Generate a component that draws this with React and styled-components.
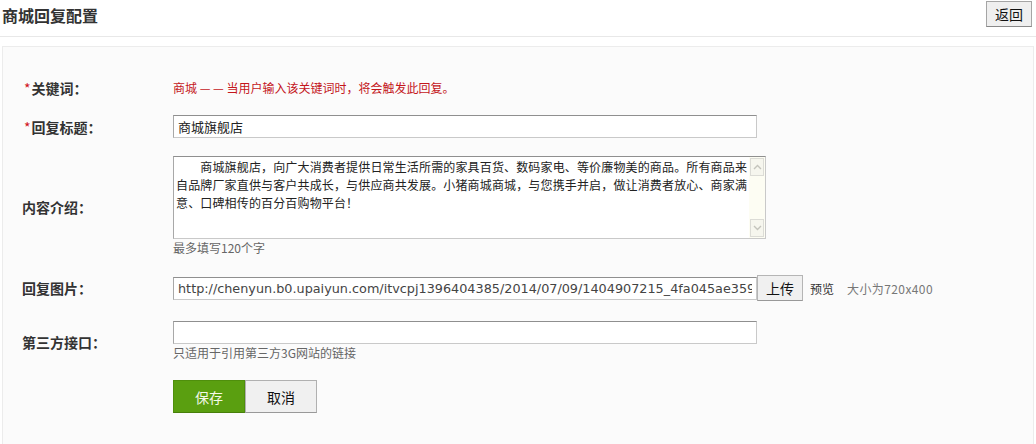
import React from "react";
import styled, { createGlobalStyle } from "styled-components";

const GlobalStyle = createGlobalStyle`
  html, body {
    margin: 0;
    padding: 0;
    background: #fff;
    font-family: "Noto Sans CJK SC", sans-serif;
    color: #333;
  }
`;

const Page = styled.div`
  width: 1036px;
  height: 444px;
  overflow: hidden;
`;

const Header = styled.div`
  display: flex;
  justify-content: space-between;
  align-items: flex-start;
  height: 36px;
  padding: 0 4px 0 2px;
  border-bottom: 1px solid #e8e8e8;
`;

const Title = styled.h2`
  margin: 0;
  font-size: 16px;
  font-weight: 700;
  line-height: 30px;
  color: #333;
`;

const BackButton = styled.button`
  margin-top: 1px;
  width: 46px;
  height: 26px;
  padding: 0;
  background: #efefef;
  border: 1px solid #a5a5a5;
  border-bottom-color: #888;
  font-family: "Noto Sans CJK SC", sans-serif;
  font-size: 14px;
  color: #111;
`;

const Panel = styled.div`
  margin: 9px 2px 0 2px;
  height: 400px;
  padding-top: 23px;
  background: #fbfbfb;
  border: 1px solid #ececec;
  border-bottom: none;
  display: grid;
  grid-template-columns: 170px 1fr;
  align-content: start;
`;

const Label = styled.div`
  display: flex;
  align-items: center;
  padding-left: 19px;
  padding-top: ${(p) => p.$shift || 0}px;
  font-size: 14px;
  font-weight: 700;
  color: #333;
`;

const Star = styled.span`
  color: #d0141c;
  font-weight: 400;
  font-size: 14px;
  margin-right: 1px;
  padding-left: 2px;
`;

const Field = styled.div`
  padding: ${(p) => 9 + (p.$shift || 0)}px 0 9px;
  display: flex;
  flex-direction: column;
  justify-content: center;
`;

const Inline = styled.div`
  display: flex;
  align-items: center;
`;

const Notice = styled.div`
  font-size: 12px;
  line-height: 18px;
  color: #c4161c;
`;

const TextInput = styled.input`
  box-sizing: border-box;
  width: 584px;
  height: 23px;
  margin: 0;
  padding: 0 4px;
  background: #fff;
  border: 1px solid #c9c9c9;
  border-top-color: #8f8f8f;
  border-left-color: #a8a8a8;
  font-family: ${(p) => (p.$latin ? '"DejaVu Sans", sans-serif' : '"Noto Sans CJK SC", sans-serif')};
  font-size: ${(p) => (p.$latin ? "12.8px" : "13px")};
  color: ${(p) => (p.$latin ? "#444" : "#222")};
  outline: none;
`;

const AreaBox = styled.div`
  box-sizing: border-box;
  width: 593px;
  height: 83px;
  display: flex;
  background: #fff;
  border: 1px solid #c9c9c9;
  border-top-color: #8f8f8f;
  border-left-color: #a8a8a8;
`;

const TextArea = styled.textarea`
  flex: 1;
  margin: 0;
  padding: 1px 0 1px 2px;
  border: none;
  resize: none;
  overflow: hidden;
  white-space: pre;
  background: transparent;
  font-family: "Noto Sans CJK SC", sans-serif;
  font-size: 12px;
  letter-spacing: 0.15px;
  line-height: 18px;
  color: #222;
  outline: none;
`;

const ScrollTrack = styled.div`
  width: 16px;
  display: flex;
  flex-direction: column;
  justify-content: space-between;
  background: #fdfdf3;
`;

const ScrollArrow = styled.div`
  height: 16px;
  margin: 1px;
  display: flex;
  align-items: center;
  justify-content: center;
  background: #f6f6ee;
  border: 1px solid #dcdcd6;
`;

const Hint = styled.div`
  font-size: 12px;
  line-height: 18px;
  color: #666;
`;

const UploadButton = styled.button`
  box-sizing: border-box;
  width: 46px;
  height: 26px;
  margin: 0 7px 0 0;
  padding: 0;
  align-self: flex-start;
  background: #f0f0f0;
  border: 1px solid #b5b5b5;
  border-bottom-color: #999;
  font-family: "Noto Sans CJK SC", sans-serif;
  font-size: 14px;
  color: #111;
`;

const Preview = styled.span`
  font-size: 12px;
  color: #333;
  margin-right: 13px;
`;

const Size = styled.span`
  font-size: 12px;
  color: #777;
  letter-spacing: 0.4px;
`;

const ActionButton = styled.button`
  box-sizing: border-box;
  width: 72px;
  height: 33px;
  margin: 0;
  padding: 0;
  font-family: "Noto Sans CJK SC", sans-serif;
  font-size: 14px;
  background: ${(p) => (p.$primary ? "#5a9f10" : "#f0f0f0")};
  color: ${(p) => (p.$primary ? "#f4f8e8" : "#111")};
  border: 1px solid ${(p) => (p.$primary ? "#4f8f0c" : "#b0b0b0")};
  border-bottom-color: ${(p) => (p.$primary ? "#477f0a" : "#999")};
`;

const Chevron = ({ up }) => (
  <svg width="9" height="6" viewBox="0 0 9 6">
    <path
      d={up ? "M1 5 L4.5 1.5 L8 5" : "M1 1 L4.5 4.5 L8 1"}
      fill="none"
      stroke="#c4c4bc"
      strokeWidth="1.4"
    />
  </svg>
);

const intro =
  "\u3000\u3000商城旗舰店，向广大消费者提供日常生活所需的家具百货、数码家电、等价廉物美的商品。所有商品来\n" +
  "自品牌厂家直供与客户共成长，与供应商共发展。小猪商城商城，与您携手并启，做让消费者放心、商家满\n" +
  "意、口碑相传的百分百购物平台！";

export default function App() {
  return (
    <Page>
      <GlobalStyle />
      <Header>
        <Title>商城回复配置</Title>
        <BackButton>返回</BackButton>
      </Header>
      <Panel>
        <Label>
          <Star>*</Star>关键词：
        </Label>
        <Field>
          <Notice>商城 — — 当用户输入该关键词时，将会触发此回复。</Notice>
        </Field>

        <Label>
          <Star>*</Star>回复标题：
        </Label>
        <Field>
          <TextInput defaultValue="商城旗舰店" />
        </Field>

        <Label>内容介绍：</Label>
        <Field>
          <AreaBox>
            <TextArea defaultValue={intro} />
            <ScrollTrack>
              <ScrollArrow>
                <Chevron up />
              </ScrollArrow>
              <ScrollArrow>
                <Chevron />
              </ScrollArrow>
            </ScrollTrack>
          </AreaBox>
          <Hint>最多填写120个字</Hint>
        </Field>

        <Label>回复图片：</Label>
        <Field>
          <Inline>
            <TextInput
              $latin
              defaultValue="http://chenyun.b0.upaiyun.com/itvcpj1396404385/2014/07/09/1404907215_4fa045ae3595.jpg"
            />
            <UploadButton>上传</UploadButton>
            <Preview>预览</Preview>
            <Size>大小为720x400</Size>
          </Inline>
        </Field>

        <Label $shift={2}>第三方接口：</Label>
        <Field $shift={2}>
          <TextInput />
          <Hint>只适用于引用第三方3G网站的链接</Hint>
        </Field>

        <div />
        <Field>
          <Inline>
            <ActionButton $primary>保存</ActionButton>
            <ActionButton>取消</ActionButton>
          </Inline>
        </Field>
      </Panel>
    </Page>
  );
}
